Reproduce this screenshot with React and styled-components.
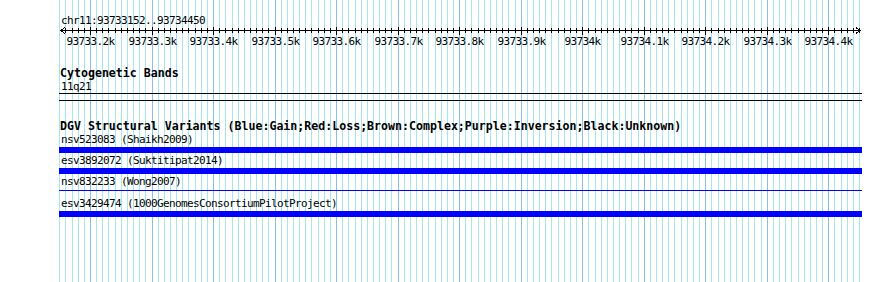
import React from "react";
import styled, { createGlobalStyle } from "styled-components";

// scale: 100bp ~ 61.5px, 93733200 sits on pixel 90
const REF_BP = 93733200;
const REF_X = 90;
const PX_PER_BP = 0.61525;
const toX = (bp) => Math.round(REF_X + (bp - REF_BP) * PX_PER_BP);

const gridStops = [];
for (let p = 93733150; p <= 93734450; p += 10) gridStops.push(p);
const majorStops = gridStops.filter((p) => p % 100 === 0 && p >= 93733200);

const features = [
  { name: "nsv523083", study: "Shaikh2009", kind: "bar" },
  { name: "esv3892072", study: "Suktitipat2014", kind: "bar" },
  { name: "nsv832233", study: "Wong2007", kind: "line" },
  { name: "esv3429474", study: "1000GenomesConsortiumPilotProject", kind: "bar" },
];

const GlobalStyle = createGlobalStyle`
  html, body {
    margin: 0;
    padding: 0;
    background: #fff;
  }
`;

const Panel = styled.div`
  position: relative;
  width: 890px;
  height: 282px;
  overflow: hidden;
  background: #fff;
  color: #000;
  font-family: "DejaVu Sans Mono", "Liberation Mono", monospace;
`;

const GridLayer = styled.svg`
  position: absolute;
  left: 0;
  top: 0;
  display: block;
`;

const Tracks = styled.div`
  position: relative;
  width: 803px;
  margin-left: 59px;
  padding-top: 14px;
`;

const Label = styled.div`
  font-size: 11px;
  letter-spacing: -0.62px;
  line-height: 13px;
  height: 13px;
  padding-left: 2px;
  white-space: nowrap;
`;

const Title = styled.div`
  font-size: 11.6px;
  font-weight: bold;
  line-height: 13px;
  height: 13px;
  padding-left: 1px;
  white-space: nowrap;
  margin-top: ${(p) => p.$gap}px;
`;

const Ruler = styled.svg`
  display: block;
  font-family: "DejaVu Sans Mono", "Liberation Mono", monospace;
`;

const Band = styled.div`
  height: 6px;
  border-top: 1px solid #000;
  border-bottom: 1px solid #000;
`;

const Feature = styled.div`
  padding-bottom: 1px;
`;

const Glyph = styled.div`
  height: 6px;
  margin-top: 1px;
  background: ${(p) => (p.$kind === "bar" ? "#0000ff" : "transparent")};

  &::after {
    content: "";
    display: ${(p) => (p.$kind === "line" ? "block" : "none")};
    height: 1px;
    margin-top: 2px;
    background: #0000ff;
  }
`;

const Grid = () => (
  <GridLayer width="890" height="282" shapeRendering="crispEdges">
    {gridStops.map((p) => {
      const x = toX(p) + 0.5;
      const major = p % 100 === 0;
      return (
        <line
          key={p}
          x1={x}
          x2={x}
          y1="0"
          y2="282"
          stroke={major ? "#88c0e8" : "#a8e6ee"}
          strokeWidth="1"
        />
      );
    })}
  </GridLayer>
);

const Scale = () => (
  <Ruler width="803" height="20" viewBox="59 27 803 20" shapeRendering="crispEdges">
    <line x1="60" x2="861" y1="30.5" y2="30.5" stroke="#000" />
    <polyline points="65,27.5 61,30.5 65,33.5" fill="none" stroke="#000" />
    <polyline points="856,27.5 860,30.5 856,33.5" fill="none" stroke="#000" />
    {gridStops
      .filter((p) => p > 93733150)
      .map((p) => {
        const x = toX(p) + 0.5;
        const major = p % 100 === 0;
        return (
          <line
            key={p}
            x1={x}
            x2={x}
            y1={major ? 27 : 28}
            y2={major ? 35 : 33}
            stroke="#000"
          />
        );
      })}
    {majorStops.map((p) => (
      <text
        key={p}
        x={toX(p) + 0.5}
        y="45"
        fontSize="11"
        letterSpacing="-0.62"
        textAnchor="middle"
        fill="#000"
      >
        {`${p / 1000}k`}
      </text>
    ))}
  </Ruler>
);

export default function App() {
  return (
    <>
      <GlobalStyle />
      <Panel>
        <Grid />
        <Tracks>
          <Label>chr11:93733152..93734450</Label>
          <Scale />

          <Title $gap={20}>Cytogenetic Bands</Title>
          <Label>11q21</Label>
          <Band />

          <Title $gap={19}>
            DGV Structural Variants (Blue:Gain;Red:Loss;Brown:Complex;Purple:Inversion;Black:Unknown)
          </Title>
          {features.map((f) => (
            <Feature key={f.name}>
              <Label>{`${f.name} (${f.study})`}</Label>
              <Glyph $kind={f.kind} />
            </Feature>
          ))}
        </Tracks>
      </Panel>
    </>
  );
}
